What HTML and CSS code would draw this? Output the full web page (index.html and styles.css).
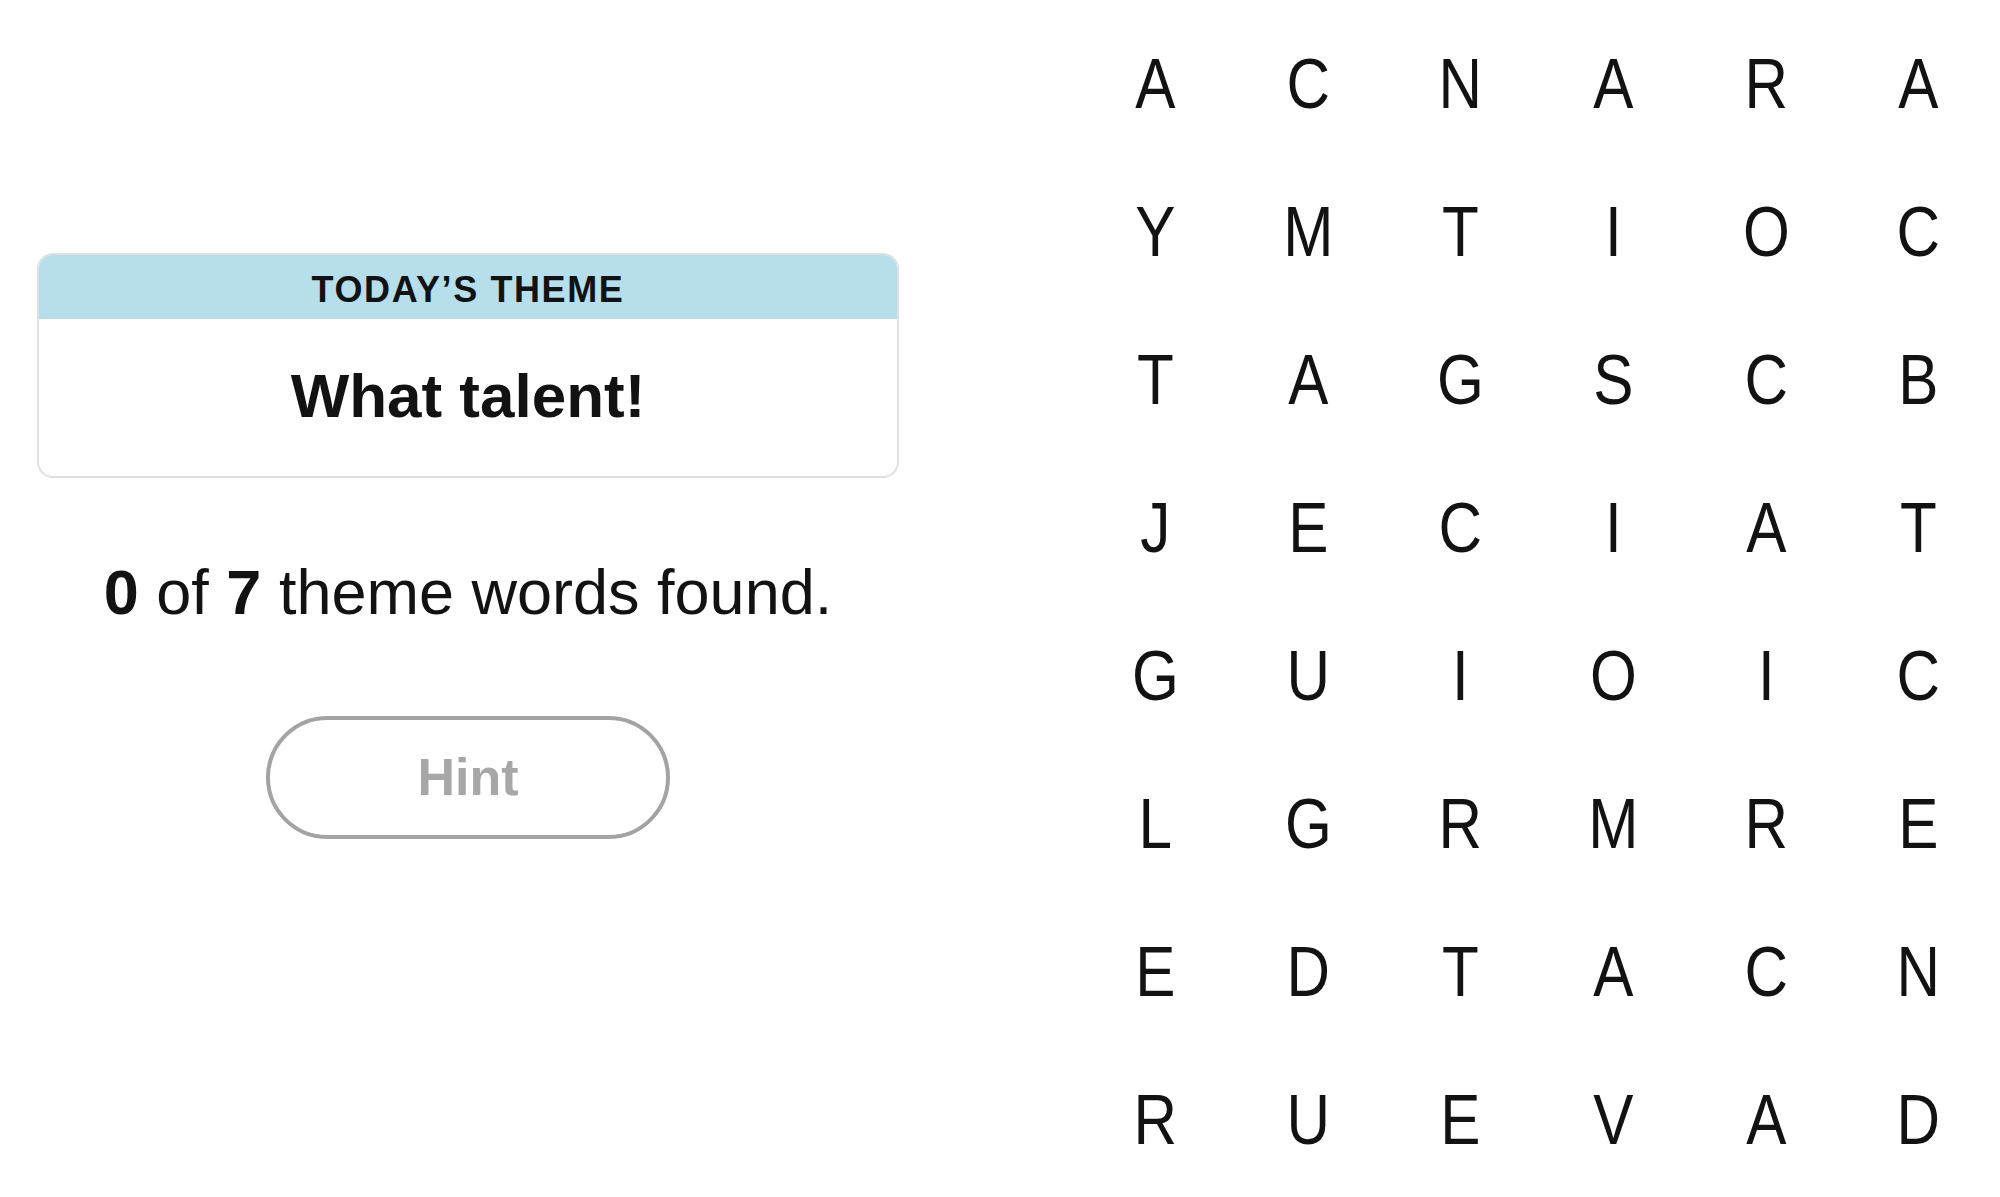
FILE: index.html
```html
<!DOCTYPE html>
<html lang="en">
<head>
<meta charset="utf-8">
<title>Strands</title>
<link rel="stylesheet" href="styles.css">
</head>
<body>
<div class="page">
  <section class="side">
    <div class="theme-card">
      <div class="theme-head">TODAY’S THEME</div>
      <div class="theme-body">What talent!</div>
    </div>
    <p class="progress"><b>0</b> of <b>7</b> theme words found.</p>
    <button class="hint" type="button">Hint</button>
  </section>
  <section class="board">
    <span>A</span><span>C</span><span>N</span><span>A</span><span>R</span><span>A</span>
    <span>Y</span><span>M</span><span>T</span><span>I</span><span>O</span><span>C</span>
    <span>T</span><span>A</span><span>G</span><span>S</span><span>C</span><span>B</span>
    <span>J</span><span>E</span><span>C</span><span>I</span><span>A</span><span>T</span>
    <span>G</span><span>U</span><span>I</span><span>O</span><span>I</span><span>C</span>
    <span>L</span><span>G</span><span>R</span><span>M</span><span>R</span><span>E</span>
    <span>E</span><span>D</span><span>T</span><span>A</span><span>C</span><span>N</span>
    <span>R</span><span>U</span><span>E</span><span>V</span><span>A</span><span>D</span>
  </section>
</div>
</body>
</html>
```
FILE: styles.css
```css
html, body {
  margin: 0;
  padding: 0;
  background: #ffffff;
}
body {
  font-family: "Liberation Sans", Arial, sans-serif;
  color: #121212;
}
.page {
  display: flex;
  width: 2000px;
  height: 1197px;
  overflow: hidden;
}
.side {
  box-sizing: border-box;
  width: 899px;
  padding: 253px 0 0 37px;
  display: flex;
  flex-direction: column;
  align-items: center;
}
.theme-card {
  box-sizing: border-box;
  width: 862px;
  border: 2px solid #e0e0e0;
  border-radius: 16px;
  overflow: hidden;
}
.theme-head {
  background: #b7deeb;
  height: 66px;
  margin: -2px -2px 0;
  padding-top: 8px;
  box-sizing: border-box;
  line-height: 58px;
  text-align: center;
  font-size: 36px;
  font-weight: 700;
  letter-spacing: 1.6px;
  color: #121212;
}
.theme-body {
  height: 157px;
  box-sizing: border-box;
  padding-bottom: 4px;
  line-height: 153px;
  text-align: center;
  font-size: 62px;
  font-weight: 700;
  color: #121212;
}
.progress {
  margin: 76px 0 0;
  font-size: 63px;
  line-height: 76px;
  white-space: nowrap;
  text-align: center;
}
.progress b {
  font-weight: 700;
}
.hint {
  margin-top: 86px;
  box-sizing: border-box;
  width: 404px;
  height: 123px;
  border: 4px solid #a3a3a3;
  border-radius: 62px;
  background: #ffffff;
  font-family: "Liberation Sans", Arial, sans-serif;
  font-size: 52px;
  font-weight: 700;
  color: #a7a7a7;
  padding: 0;
  line-height: 115px;
}
.board {
  margin-left: 180.3px;
  padding-top: 10px;
  display: grid;
  grid-template-columns: repeat(6, 152.6px);
  grid-template-rows: repeat(8, 148px);
  align-content: start;
}
.board span {
  display: block;
  text-align: center;
  font-size: 70px;
  line-height: 149px;
  color: #121212;
  transform: scaleX(0.86);
}
```
